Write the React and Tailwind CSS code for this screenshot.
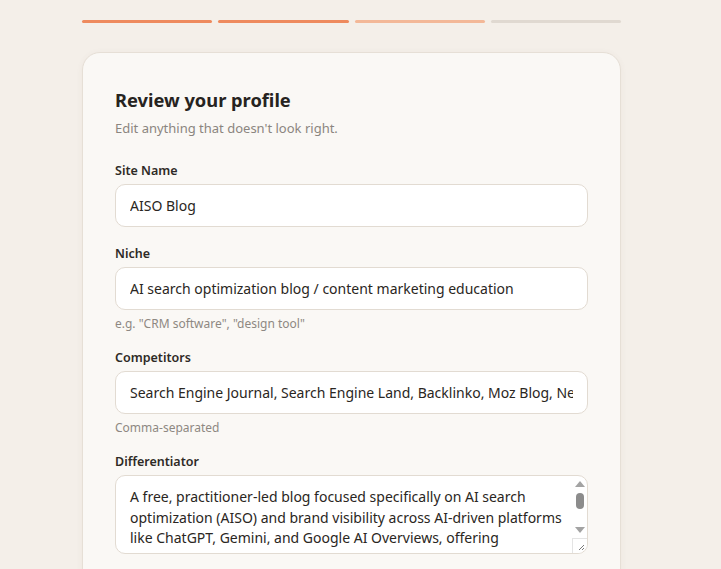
export default function App() {
    const steps = ['bg-[#ee8a5e]', 'bg-[#ee8a5e]', 'bg-[#f3b898]', 'bg-[#e0d9d1]'];
    const font = { fontFamily: '"Noto Sans", "Open Sans", sans-serif' };

    return (
        <div className="min-h-[569px] bg-[#f4efe9] text-[#2a2622]" style={font}>
            <div className="w-[539px] ml-[82px] pt-[20px]">
                <div className="flex gap-[6px]">
                    {steps.map((c, i) => (
                        <div key={i} className={`h-[3px] flex-1 rounded-full ${c}`}></div>
                    ))}
                </div>

                <div className="mt-[29px] rounded-[18px] border border-[#e6dfd6] bg-[#faf8f5] px-[32px] pt-[33px] pb-[40px] shadow-[0_1px_6px_rgba(120,90,60,0.06)]">
                    <h1 className="text-[18.3px] font-bold leading-[28px] text-[#262320]">Review your profile</h1>
                    <p className="mt-[5px] text-[13px] leading-[18px] text-[#8b857f]">Edit anything that doesn't look right.</p>

                    <Field label="Site Name" className="mt-[25px]">
                        <Input value="AISO Blog" />
                    </Field>

                    <Field label="Niche" className="mt-[18px]" hint={'e.g. "CRM software", "design tool"'}>
                        <Input value="AI search optimization blog / content marketing education" />
                    </Field>

                    <Field label="Competitors" className="mt-[17px]" hint="Comma-separated">
                        <Input value="Search Engine Journal, Search Engine Land, Backlinko, Moz Blog, Neil Patel Blog" />
                    </Field>

                    <Field label="Differentiator" className="mt-[17px]">
                        <div className="relative">
                            <textarea
                                readOnly
                                className="block h-[79px] w-full resize-none overflow-hidden rounded-[10px] border border-[#e2dbd2] bg-white pl-[14px] pr-[22px] pt-[11px] pb-0 text-[14px] leading-[20.5px] text-[#2a2622] outline-none"
                                value="A free, practitioner-led blog focused specifically on AI search optimization (AISO) and brand visibility across AI-driven platforms like ChatGPT, Gemini, and Google AI Overviews, offering actionable insights for marketers and content creators navigating the shift from traditional SEO."
                            />
                            {/* native-looking scrollbar + resize grip */}
                            <div className="absolute right-[1px] top-[6px] flex w-[14px] flex-col items-center">
                                <svg width="10" height="6" viewBox="0 0 10 6"><path d="M5 0L10 6H0Z" fill="#a3a3a3" /></svg>
                                <div className="mt-[6px] h-[16px] w-[8px] rounded-full bg-[#8c8c8c]"></div>
                                <svg className="mt-[18px]" width="10" height="6" viewBox="0 0 10 6"><path d="M0 0H10L5 6Z" fill="#a3a3a3" /></svg>
                            </div>
                            <div className="absolute bottom-[1px] right-[1px] h-[15px] w-[15px] rounded-br-[9px] border-l border-t border-[#e4e4e4] bg-white">
                                <svg width="14" height="14" viewBox="0 0 14 14"><path d="M11 6L6 11M11 9L9 11" stroke="#7a7a7a" strokeWidth="1" /></svg>
                            </div>
                        </div>
                    </Field>
                </div>
            </div>
        </div>
    );
}

function Field({ label, hint, className = '', children }) {
    return (
        <div className={className}>
            <label className="block text-[12.5px] font-semibold leading-[18px] text-[#2e2a26]">{label}</label>
            <div className="mt-[4px]">{children}</div>
            {hint && <p className="mt-[6px] text-[12px] leading-[16px] text-[#8e8882]">{hint}</p>}
        </div>
    );
}

function Input({ value }) {
    return (
        <input
            readOnly
            value={value}
            className="block h-[43px] w-full rounded-[10px] border border-[#e2dbd2] bg-white px-[14px] text-[14px] text-[#2a2622] outline-none"
        />
    );
}
